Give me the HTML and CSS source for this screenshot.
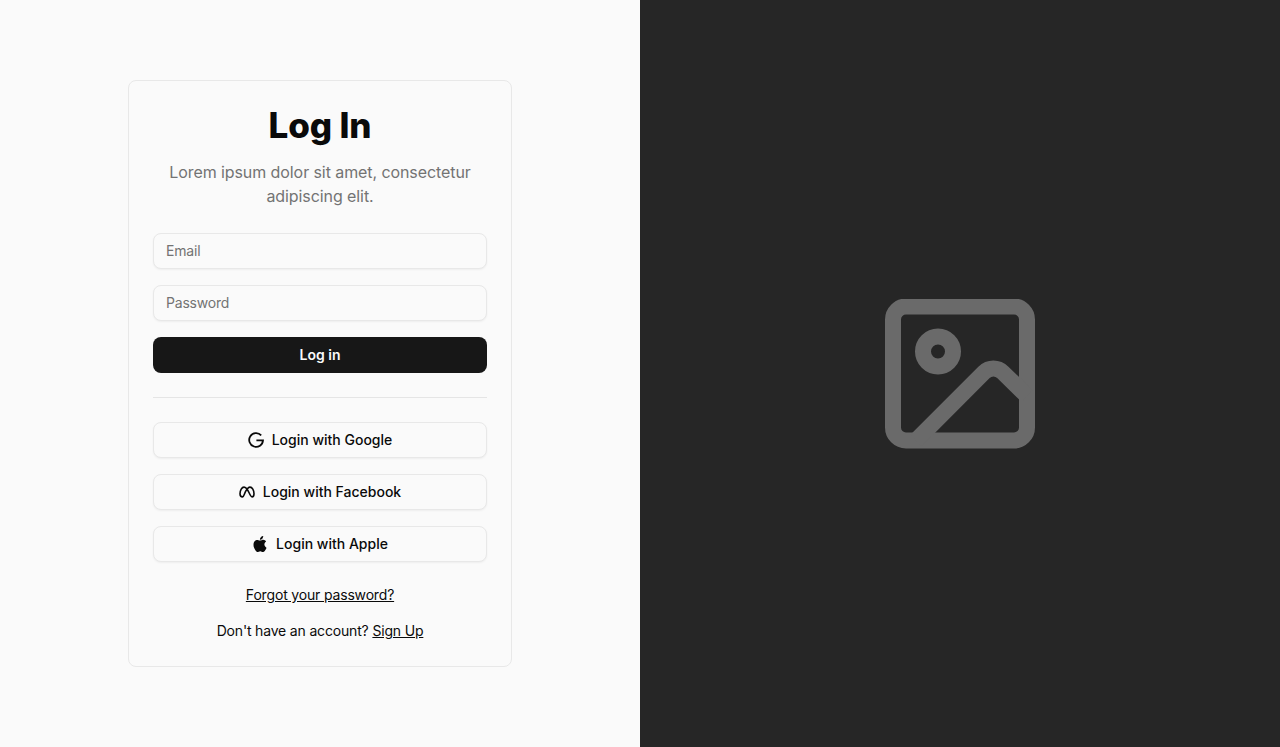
FILE: index.html
```html
<!DOCTYPE html>
<html lang="en">
<head>
  <meta charset="UTF-8" />
  <meta name="viewport" content="width=device-width, initial-scale=1.0"/>
  <title>Log In</title>
  <link rel="stylesheet" href="styles.css">
</head>
<body>

  <div class="page">
    <div class="left">
      <div class="card">
        <h1>Log In</h1>
        <p class="sub">Lorem ipsum dolor sit amet, consectetur adipiscing elit.</p>

        <div class="form">
          <input type="email" placeholder="Email" />
          <input type="password" placeholder="Password" />
          <button class="primary">Log in</button>
        </div>

        <hr class="divider" />

        <div class="socials">
          <button class="social">
            <svg width="16" height="16" viewBox="0 0 16 16" fill="none" stroke="currentColor" stroke-width="1.8">
              <path d="M13.2 3.3A6.9 6.9 0 1 0 15 8.4H8.4"/>
            </svg>
            Login with Google
          </button>
          <button class="social">
            <svg width="16" height="12" viewBox="0 0 16 12" fill="none" stroke="currentColor" stroke-width="1.6">
              <path d="M3.6 10.9C1.9 10.9 1 9.6 1 7.7 1 4.2 2.9 1.1 5 1.1 7 1.1 8.6 3.6 10.2 7 11.4 9.5 12.2 10.9 13 10.9 14.3 10.9 15 9.7 15 7.8 15 4.2 13.2 1.1 11 1.1 9.2 1.1 7.9 3 6.6 5.4 5.2 8 4.8 10.9 3.6 10.9Z"/>
            </svg>
            Login with Facebook
          </button>
          <button class="social">
            <svg width="16" height="16" viewBox="0 0 16 16" fill="currentColor">
              <path d="M11.182.008C11.148-.03 9.923.023 8.857 1.18c-1.066 1.156-.902 2.482-.878 2.516s1.52.087 2.475-1.258.762-2.391.728-2.43m3.314 11.733c-.048-.096-2.325-1.234-2.113-3.422s1.675-2.789 1.698-2.854-.597-.79-1.254-1.157a3.7 3.7 0 0 0-1.563-.434c-.108-.003-.483-.095-1.254.116-.508.139-1.653.589-1.968.607-.316.018-1.256-.522-2.267-.665-.647-.125-1.333.131-1.824.328-.49.196-1.422.754-2.074 2.237-.652 1.482-.311 3.83-.067 4.56s.625 1.924 1.273 2.796c.576.984 1.34 1.667 1.659 1.899s1.219.386 1.843.067c.502-.308 1.408-.485 1.766-.472.357.013 1.061.154 1.782.539.571.197 1.111.115 1.652-.105.541-.221 1.324-1.059 2.238-2.758q.52-1.185.473-1.282"/>
            </svg>
            Login with Apple
          </button>
        </div>

        <div class="links">
          <a href="#">Forgot your password?</a>
          <div>Don't have an account? <a href="#">Sign Up</a></div>
        </div>
      </div>
    </div>

    <div class="right">
      <svg width="150" height="150" viewBox="0 0.5 150 150" fill="none" stroke="#6a6a6a" stroke-width="16">
        <rect x="8" y="8" width="134" height="134" rx="13"/>
        <circle cx="53" cy="53" r="15"/>
        <path d="M31 142 99 73.9A13.3 13.3 0 0 1 117.8 73.9L142 97.5"/>
      </svg>
    </div>
  </div>

</body>
</html>
```

FILE: styles.css
```css
* {
  box-sizing: border-box;
}

body {
  margin: 0;
  font-family: Inter, 'Noto Sans', sans-serif;
  color: #0a0a0a;
}

.page {
  display: grid;
  grid-template-columns: 1fr 1fr;
  height: 100vh;
}

.left {
  background: #fafafa;
  display: flex;
  align-items: center;
  justify-content: center;
}

.right {
  background: #262626;
  display: flex;
  align-items: center;
  justify-content: center;
}

.card {
  width: 384px;
  padding: 24px;
  border: 1px solid #e8e8e8;
  border-radius: 8px;
  background: #fafafa;
}

h1 {
  margin: 0;
  font-size: 35px;
  line-height: 40px;
  font-weight: 800;
  letter-spacing: -0.15px;
  text-align: center;
}

.sub {
  margin: 15px 0 25px;
  font-size: 16px;
  line-height: 24px;
  letter-spacing: -0.08px;
  color: #737373;
  text-align: center;
}

.form,
.socials {
  display: flex;
  flex-direction: column;
  gap: 16px;
}

input {
  height: 36px;
  width: 100%;
  padding: 0 12px 2px;
  border: 1px solid #e8e8e8;
  border-radius: 8px;
  background: #fafafa;
  box-shadow: 0 1px 2px rgba(0, 0, 0, 0.05);
  font: 14px Inter, sans-serif;
  letter-spacing: -0.2px;
}

input::placeholder {
  color: #737373;
}

button {
  height: 36px;
  width: 100%;
  padding: 0 0 2px;
  border-radius: 8px;
  font: 500 14px Inter, sans-serif;
  cursor: pointer;
}

.primary {
  border: none;
  background: #171717;
  color: #fafafa;
  font-weight: 600;
}

.social {
  display: flex;
  align-items: center;
  justify-content: center;
  gap: 8px;
  border: 1px solid #e8e8e8;
  background: #fafafa;
  color: #0a0a0a;
  box-shadow: 0 1px 2px rgba(0, 0, 0, 0.05);
}

.social svg {
  margin-top: 2px;
}

.divider {
  height: 1px;
  margin: 24px 0;
  border: none;
  background: #e5e5e5;
}

.links {
  margin-top: 23px;
  padding-bottom: 1px;
  display: flex;
  flex-direction: column;
  gap: 16px;
  align-items: center;
  font-size: 14px;
  line-height: 20px;
  letter-spacing: -0.17px;
}

.links a {
  color: #0a0a0a;
}
```
